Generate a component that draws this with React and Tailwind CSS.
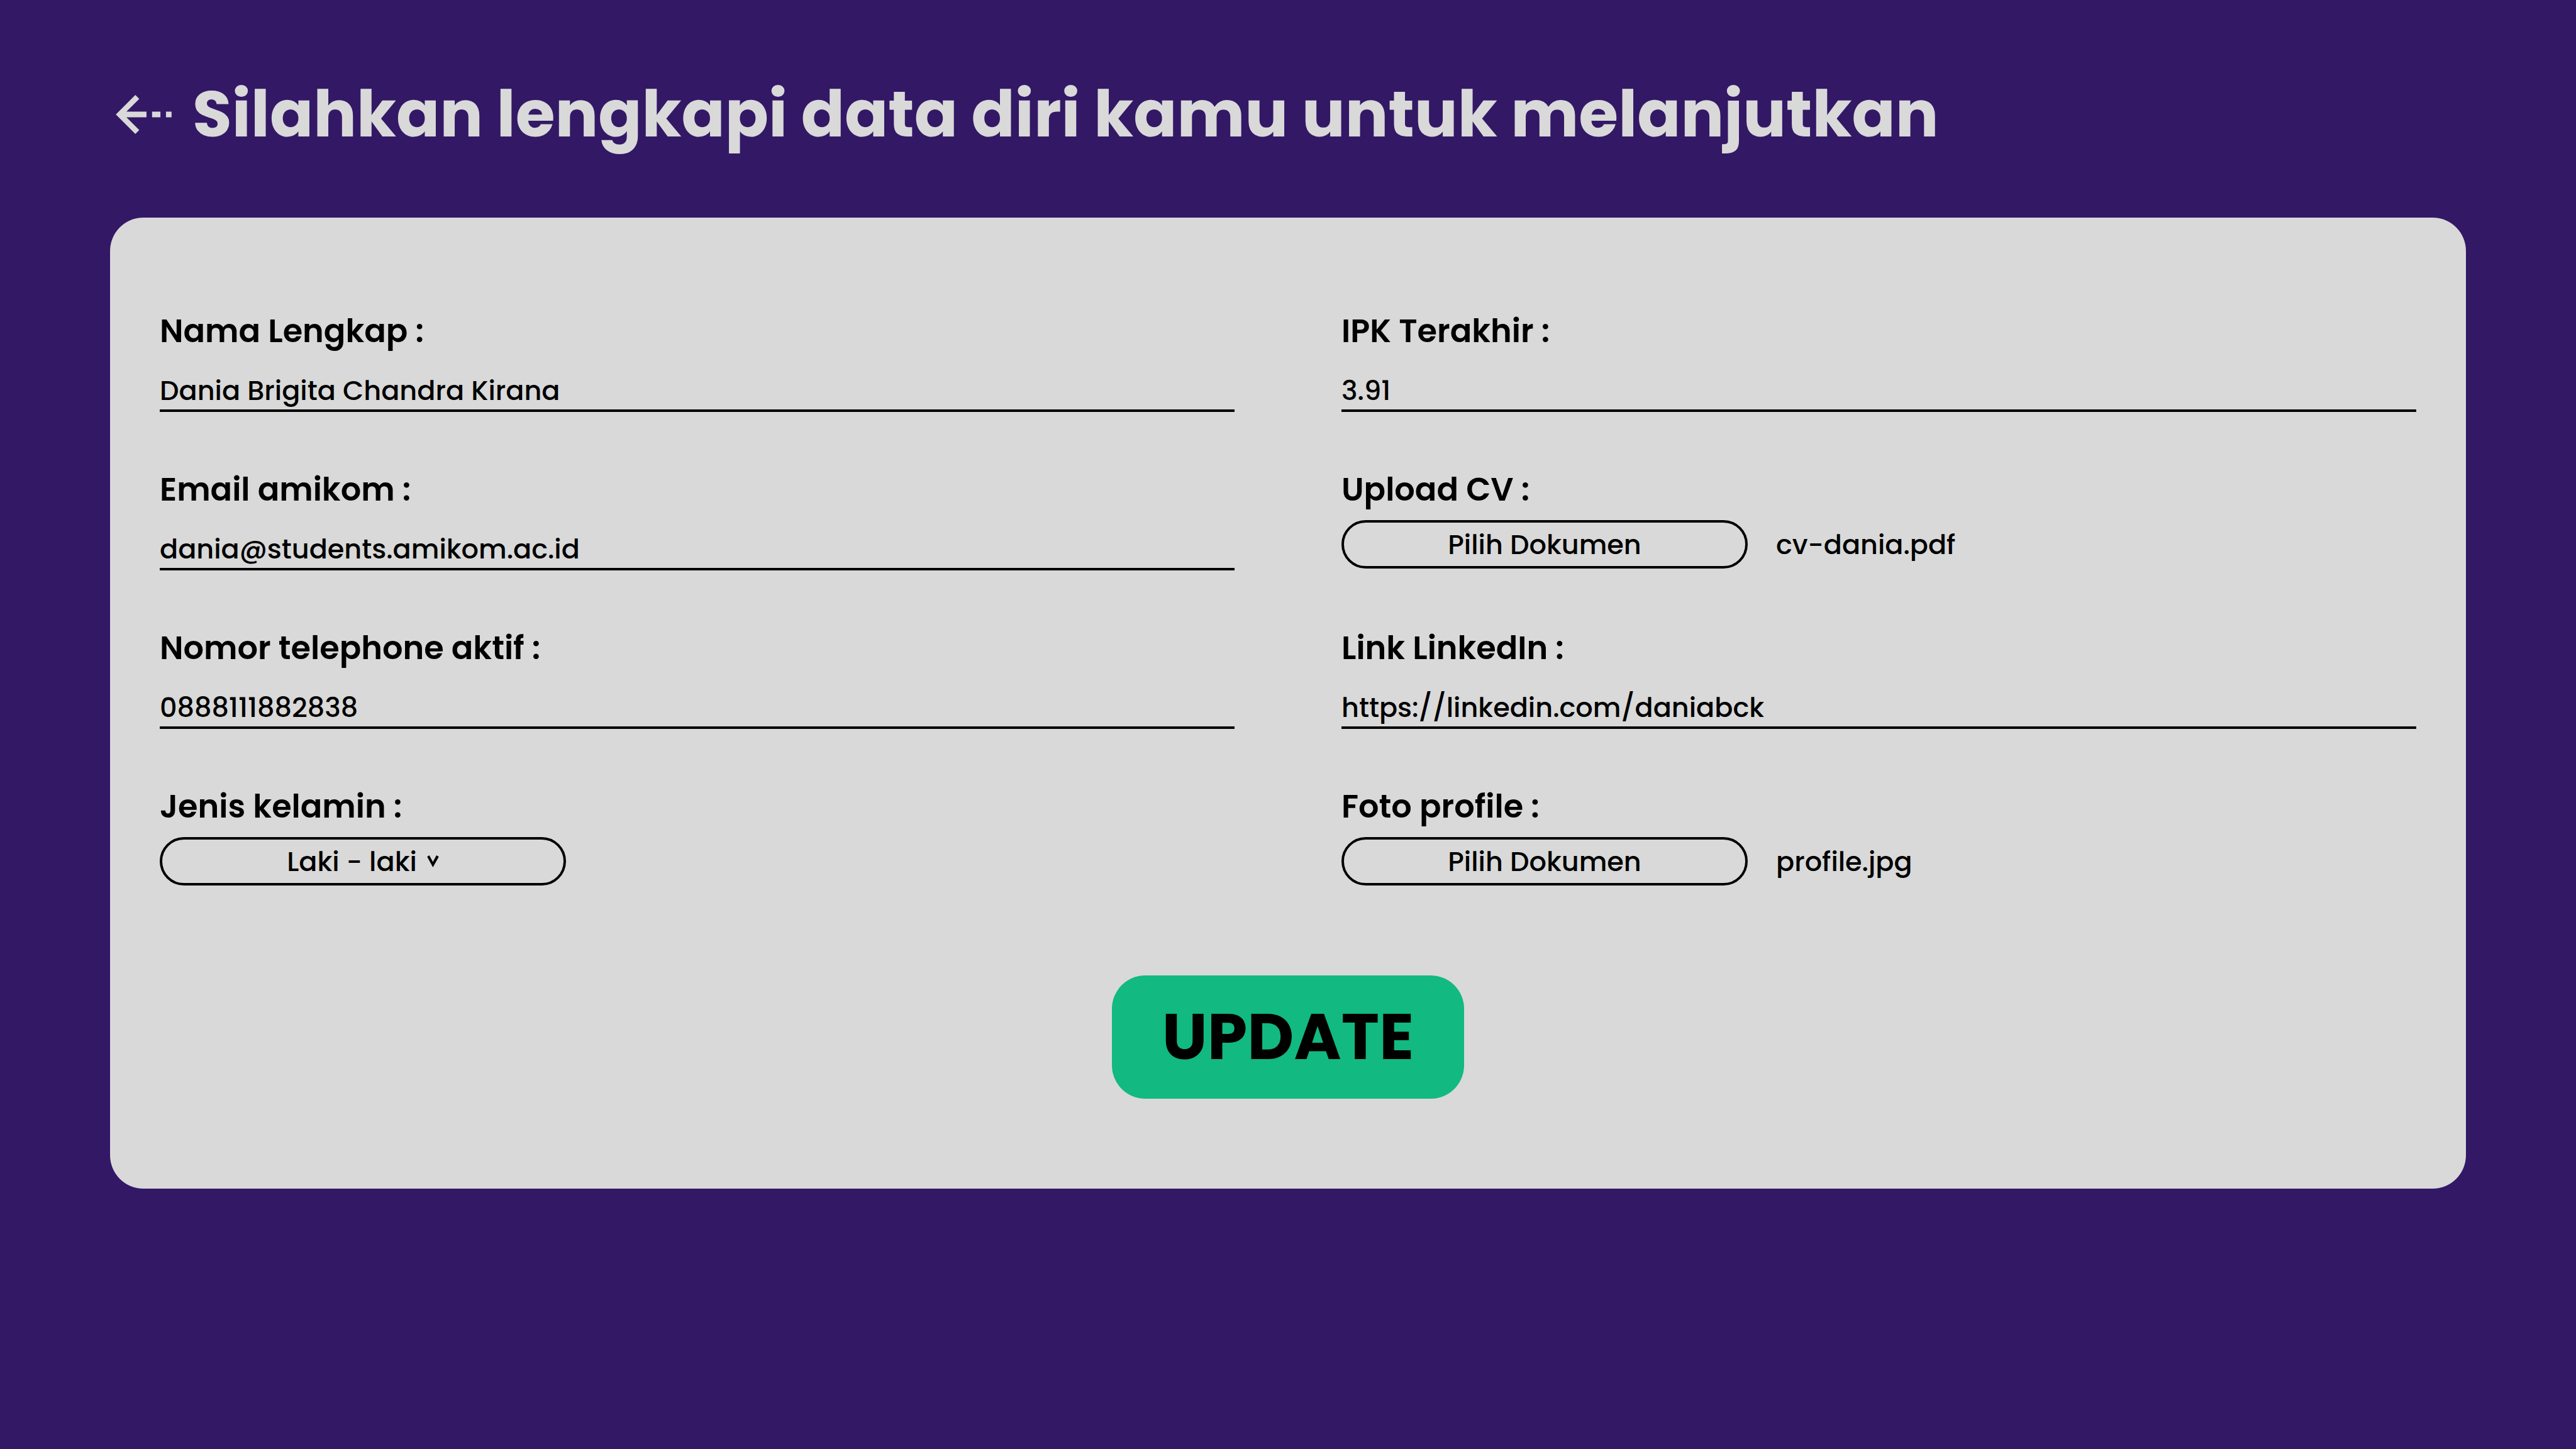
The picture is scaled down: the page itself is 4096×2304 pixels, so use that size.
import React from "react";

const leftFields = [
  { id: "nama", label: "Nama Lengkap :", type: "text", value: "Dania Brigita Chandra Kirana" },
  { id: "email", label: "Email amikom :", type: "email", value: "dania@students.amikom.ac.id" },
  { id: "telepon", label: "Nomor telephone aktif :", type: "tel", value: "0888111882838" },
  { id: "kelamin", label: "Jenis kelamin :", type: "select", options: ["Laki - laki", "Perempuan"] },
];

const rightFields = [
  { id: "ipk", label: "IPK Terakhir :", type: "text", value: "3.91" },
  { id: "cv", label: "Upload CV :", type: "file", value: "cv-dania.pdf" },
  { id: "linkedin", label: "Link LinkedIn :", type: "url", value: "https://linkedin.com/daniabck" },
  { id: "foto", label: "Foto profile :", type: "file", value: "profile.jpg" },
];

function BackArrow() {
  return (
    <svg viewBox="0 0 20 14" className="h-[62px] w-[89px] shrink-0" fill="currentColor" aria-hidden="true">
      <path d="M0 7 7 0l1.4 1.4L3.8 6H11v2H3.8l4.6 4.6L7 14Z" />
      <path d="M13 6h3v2h-3ZM18 6h2v2h-2Z" />
    </svg>
  );
}

function Chevron() {
  return (
    <svg viewBox="0 0 35 36" className="pointer-events-none h-[19px] w-[19px] shrink-0" aria-hidden="true">
      <path d="M0 4.3 6.3 0 17.2 20 28 0l7 4.3L17.2 36Z" />
    </svg>
  );
}

function TextField({ id, type, value }) {
  return (
    <input
      id={id}
      type={type}
      defaultValue={value}
      className="mt-[33px] block h-[64px] w-full border-b-4 border-black bg-transparent text-[43px] leading-[60px] font-medium outline-none"
    />
  );
}

function SelectField({ id, options }) {
  return (
    <div className="mt-[17px] flex h-[77px] w-[646px] items-center justify-center gap-4 rounded-full border-4 border-black">
      <select
        id={id}
        className="[field-sizing:content] appearance-none bg-transparent text-[43px] leading-[60px] font-medium outline-none"
      >
        {options.map((o) => (
          <option key={o}>{o}</option>
        ))}
      </select>
      <Chevron />
    </div>
  );
}

function FileField({ id, value }) {
  return (
    <div className="mt-[17px] flex items-center gap-[45px] text-[43px] leading-[60px] font-medium">
      <button
        id={id}
        type="button"
        className="flex h-[77px] w-[646px] items-center justify-center rounded-full border-4 border-black"
      >
        Pilih Dokumen
      </button>
      <span>{value}</span>
    </div>
  );
}

function Field(props) {
  const Control = props.type === "select" ? SelectField : props.type === "file" ? FileField : TextField;
  return (
    <div>
      <label htmlFor={props.id} className="block text-[51px] leading-[64px] font-semibold">
        {props.label}
      </label>
      <Control {...props} />
    </div>
  );
}

export default function App() {
  const rows = leftFields.flatMap((field, i) => [field, rightFields[i]]);
  return (
    <main className="min-h-screen bg-[#331866] px-[175px] pt-[122px] pb-[122px] font-[Poppins,Inter,sans-serif] text-black">
      <header className="flex items-center gap-[33px] pl-[9px] text-[#d9d9d9]">
        <a href="#kembali" aria-label="Kembali">
          <BackArrow />
        </a>
        <h1 className="text-[102px] leading-[120px] font-bold">
          Silahkan lengkapi data diri kamu untuk melanjutkan
        </h1>
      </header>
      <form className="mt-[104px] rounded-[53px] bg-[#d9d9d9] px-[79px] pt-[148px] pb-[143px]">
        <div className="grid grid-cols-2 gap-x-[170px] gap-y-[91px]">
          {rows.map((field) => (
            <Field key={field.id} {...field} />
          ))}
        </div>
        <button
          type="submit"
          className="mx-auto mt-[143px] block rounded-[53px] bg-[#12b981] px-[80px] py-[38px] text-[102px] leading-[120px] font-bold"
        >
          UPDATE
        </button>
      </form>
    </main>
  );
}
